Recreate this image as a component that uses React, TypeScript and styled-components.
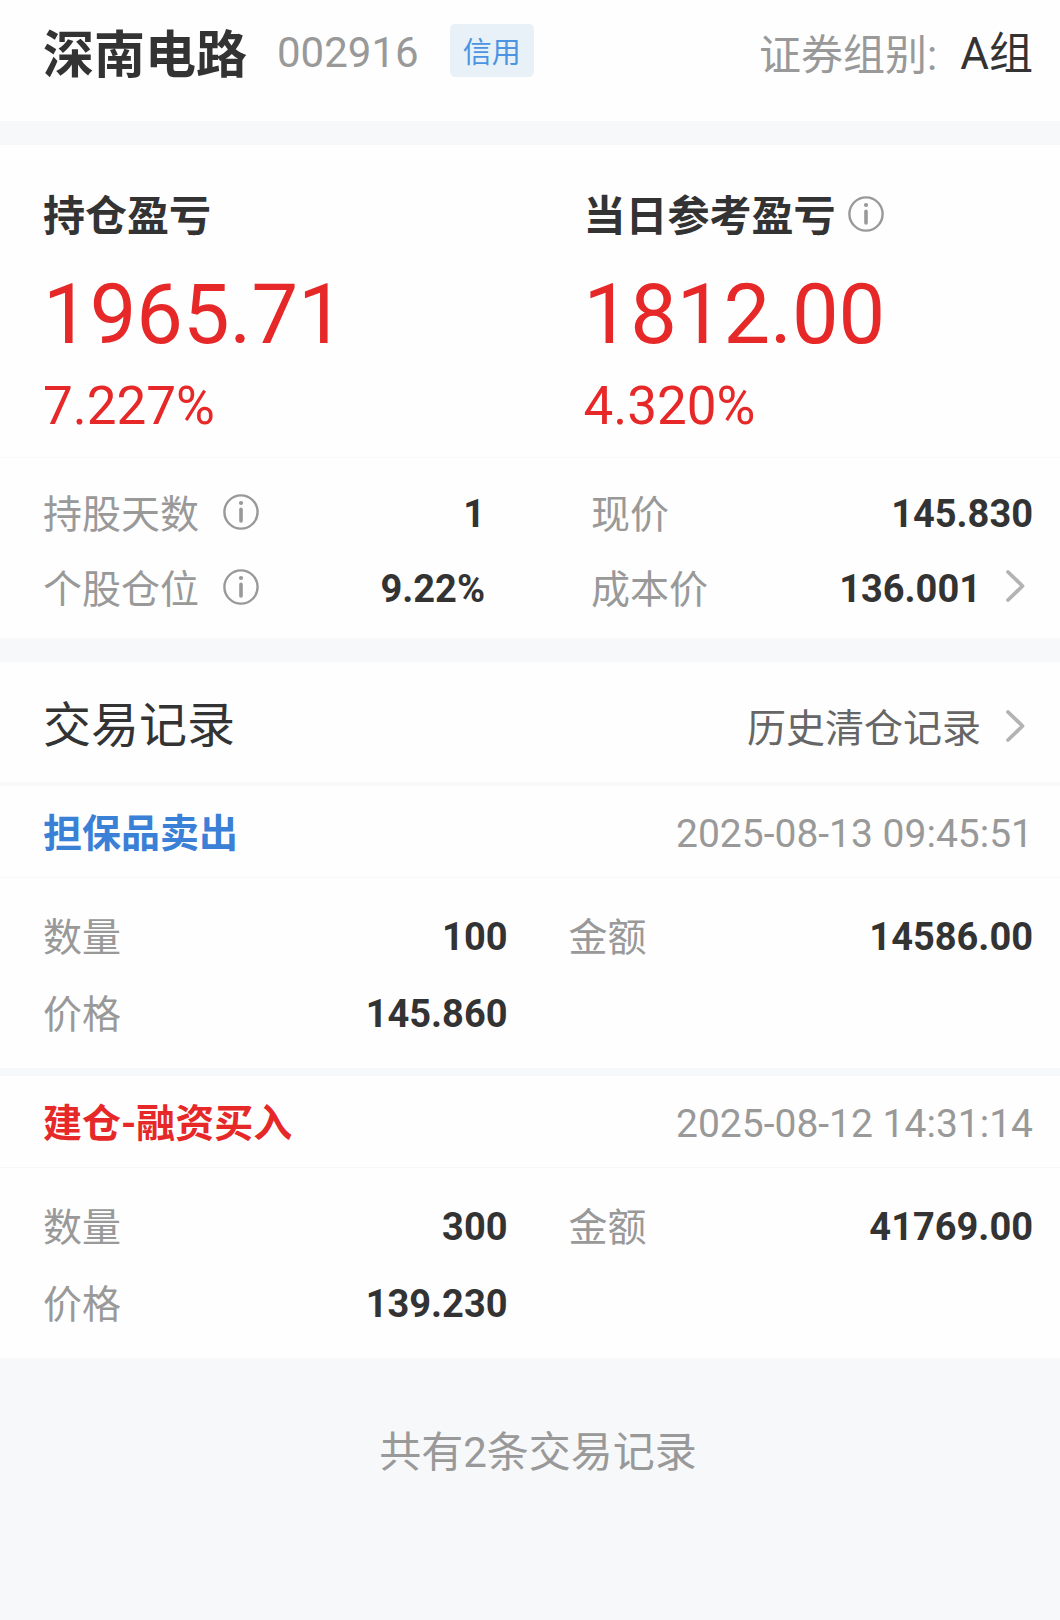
import React from "react";
import styled, { createGlobalStyle } from "styled-components";

const color = {
  page: "#f7f8fa",
  surface: "#fefefe",
  line: "#f7f8f9",
  text: "#333333",
  secondary: "#666666",
  muted: "#999999",
  arrow: "#b3b3b3",
  rise: "#e62828",
  sell: "#3a80d6",
  tag: "#4a94e2",
  tagBg: "#e8f0f8",
};

const GlobalStyle = createGlobalStyle`
  * { box-sizing: border-box; }
  body {
    margin: 0;
    background: ${color.page};
    color: ${color.text};
    font-family: Roboto, "Noto Sans CJK SC", sans-serif;
    font-size: 39px;
    line-height: 48px;
  }
  h1, h2, h3, p, dl, dd { margin: 0; }
`;

const Page = styled.main`
  display: flex;
  flex-direction: column;
`;

const Panel = styled.section`
  background: ${color.surface};
  margin-bottom: 24px;
`;

const Header = styled.header`
  display: flex;
  align-items: flex-start;
  justify-content: space-between;
  padding: 24px 27px 33px 43px;
  margin-bottom: 24px;
  background: ${color.surface};
`;

const Stock = styled.div`
  display: flex;
  align-items: flex-start;
`;

const StockName = styled.h1`
  font-size: 51px;
  font-weight: 700;
  line-height: 64px;
`;

const StockCode = styled.span`
  margin: 0 31px 0 30px;
  font-size: 42px;
  line-height: 57px;
  color: ${color.muted};
`;

const Tag = styled.span`
  padding: 6px 13px 0;
  border-radius: 5px;
  background: ${color.tagBg};
  color: ${color.tag};
  font-size: 29px;
  line-height: 47px;
`;

const Group = styled.p`
  display: flex;
  align-items: flex-start;
  gap: 23px;
  font-size: 44px;
  line-height: 60px;
`;

const GroupLabel = styled.span`
  font-size: 42px;
  line-height: 64px;
  color: ${color.muted};
`;

const Summary = styled.div`
  display: grid;
  grid-template-columns: 1fr 1fr;
  column-gap: 91px;
  padding: 48px 27px 24px 43px;
  border-bottom: 1px solid ${color.line};
`;

const SummaryTitle = styled.div`
  display: flex;
  align-items: center;
  gap: 12px;
  white-space: nowrap;
`;

const SummaryName = styled.h2`
  font-size: 42px;
  font-weight: 700;
  line-height: 48px;
`;

const Amount = styled.p`
  margin-top: 32px;
  color: ${color.rise};
  font-size: 83px;
  line-height: 84px;
`;

const Percent = styled.p`
  margin-top: 22px;
  color: ${color.rise};
  font-size: 53px;
  line-height: 54px;
`;

const Stats = styled.dl<{ $gap: number; $row: number; $top: number; $bottom: number }>`
  display: grid;
  grid-template-columns: 1fr 1fr;
  grid-auto-rows: ${(p) => p.$row}px;
  column-gap: ${(p) => p.$gap}px;
  padding: ${(p) => p.$top}px 27px ${(p) => p.$bottom}px 43px;
`;

const Stat = styled.div`
  display: flex;
  align-items: center;
  justify-content: space-between;
`;

const StatLabel = styled.dt`
  display: flex;
  align-items: center;
  gap: 24px;
  padding-top: 2px;
  color: ${color.muted};
`;

const StatValue = styled.dd`
  display: flex;
  align-items: center;
  gap: 24px;
  font-size: 38px;
  font-weight: 700;
`;

const IconButton = styled.button`
  display: flex;
  padding: 0;
  border: 0;
  background: none;
  color: ${color.muted};
  cursor: pointer;
`;

const InfoButton = styled(IconButton)`
  margin-bottom: 6px;
`;

const Icon = styled.svg`
  display: block;
  flex: none;
  fill: none;
  stroke: currentColor;
  stroke-linecap: round;
  stroke-linejoin: round;
`;

const RecordsHeader = styled.div`
  display: flex;
  align-items: baseline;
  justify-content: space-between;
  padding: 40px 27px 29px 43px;
  border-bottom: 4px solid ${color.line};
`;

const RecordsTitle = styled.h2`
  font-size: 48px;
  font-weight: 400;
`;

const HistoryLink = styled.a`
  display: flex;
  align-items: center;
  gap: 24px;
  color: ${color.secondary};
  text-decoration: none;
`;

const Arrow = styled.span`
  display: flex;
  margin: 0 8px 6px 0;
  color: ${color.arrow};
`;

const Record = styled.article`
  & + & {
    border-top: 8px solid ${color.page};
  }
`;

const RecordHeader = styled.header`
  display: flex;
  justify-content: space-between;
  padding: 24px 27px 19px 43px;
  border-bottom: 1px solid ${color.line};
`;

const RecordType = styled.h3<{ $side: "buy" | "sell" }>`
  color: ${(p) => (p.$side === "buy" ? color.rise : color.sell)};
  font-size: 39px;
  font-weight: 700;
`;

const Time = styled.time`
  color: ${color.muted};
`;

const Footer = styled.footer`
  padding: 47px 27px 70px 43px;
  color: ${color.muted};
  font-size: 42px;
  text-align: center;
`;

function Info({ label }: { label: string }) {
  return (
    <InfoButton type="button" aria-label={label}>
      <Icon width="36" height="36" viewBox="0 0 36 36" strokeWidth="2.4">
        <circle cx="18" cy="18" r="16.6" />
        <circle cx="18" cy="9" r="2.1" fill="currentColor" stroke="none" />
        <path d="M18 15.4V27" strokeWidth="3.6" />
      </Icon>
    </InfoButton>
  );
}

function Chevron() {
  return (
    <Arrow>
      <Icon width="20" height="34" viewBox="0 0 20 34" strokeWidth="3.8">
        <path d="M3 3l14.5 14L3 31" />
      </Icon>
    </Arrow>
  );
}

const records = [
  { side: "sell", type: "担保品卖出", time: "2025-08-13 09:45:51", count: "100", amount: "14586.00", price: "145.860" },
  { side: "buy", type: "建仓-融资买入", time: "2025-08-12 14:31:14", count: "300", amount: "41769.00", price: "139.230" },
] as const;

export default function App() {
  return (
    <Page>
      <GlobalStyle />
      <Header>
        <Stock>
          <StockName>深南电路</StockName>
          <StockCode>002916</StockCode>
          <Tag>信用</Tag>
        </Stock>
        <Group>
          <GroupLabel>证券组别:</GroupLabel>
          <span>A组</span>
        </Group>
      </Header>

      <Panel>
        <Summary>
          <div>
            <SummaryTitle>
              <SummaryName>持仓盈亏</SummaryName>
            </SummaryTitle>
            <Amount>1965.71</Amount>
            <Percent>7.227%</Percent>
          </div>
          <div>
            <SummaryTitle>
              <SummaryName>当日参考盈亏</SummaryName>
              <Info label="当日参考盈亏说明" />
            </SummaryTitle>
            <Amount>1812.00</Amount>
            <Percent>4.320%</Percent>
          </div>
        </Summary>
        <Stats $gap={106} $row={75} $top={18} $bottom={12}>
          <Stat>
            <StatLabel>
              持股天数
              <Info label="持股天数说明" />
            </StatLabel>
            <StatValue>1</StatValue>
          </Stat>
          <Stat>
            <StatLabel>现价</StatLabel>
            <StatValue>145.830</StatValue>
          </Stat>
          <Stat>
            <StatLabel>
              个股仓位
              <Info label="个股仓位说明" />
            </StatLabel>
            <StatValue>9.22%</StatValue>
          </Stat>
          <Stat>
            <StatLabel>成本价</StatLabel>
            <StatValue>
              136.001
              <IconButton type="button" aria-label="成本价详情">
                <Chevron />
              </IconButton>
            </StatValue>
          </Stat>
        </Stats>
      </Panel>

      <Panel>
        <RecordsHeader>
          <RecordsTitle>交易记录</RecordsTitle>
          <HistoryLink href="#history">
            历史清仓记录
            <Chevron />
          </HistoryLink>
        </RecordsHeader>
        {records.map((r) => (
          <Record key={r.time}>
            <RecordHeader>
              <RecordType $side={r.side}>{r.type}</RecordType>
              <Time dateTime={r.time}>{r.time}</Time>
            </RecordHeader>
            <Stats $gap={61} $row={77} $top={20} $bottom={16}>
              <Stat>
                <StatLabel>数量</StatLabel>
                <StatValue>{r.count}</StatValue>
              </Stat>
              <Stat>
                <StatLabel>金额</StatLabel>
                <StatValue>{r.amount}</StatValue>
              </Stat>
              <Stat>
                <StatLabel>价格</StatLabel>
                <StatValue>{r.price}</StatValue>
              </Stat>
            </Stats>
          </Record>
        ))}
      </Panel>

      <Footer>共有{records.length}条交易记录</Footer>
    </Page>
  );
}
